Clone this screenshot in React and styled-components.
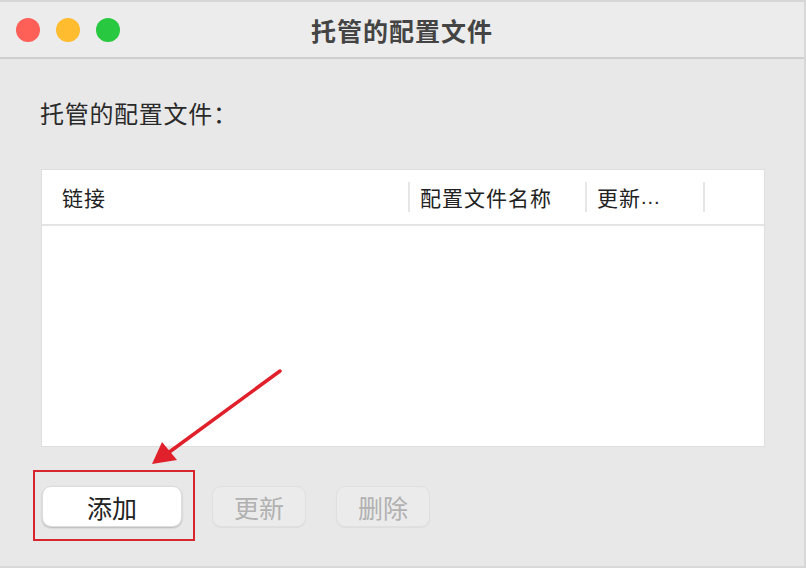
import React from "react";
import styled, { createGlobalStyle } from "styled-components";

const Global = createGlobalStyle`
  html, body { margin: 0; padding: 0; background: #e8e8e8; }
  body { font-family: "Noto Sans CJK SC", "Noto Sans", sans-serif; }
`;

const Window = styled.div`
  position: relative;
  width: 806px;
  height: 568px;
  box-sizing: border-box;
  background: #e8e8e8;
  border-top: 2px solid #d6d6d6;
  border-right: 2px solid #d8d8d8;
  border-bottom: 2px solid #d8d8d8;
  display: flex;
  flex-direction: column;
  overflow: hidden;
`;

const TitleBar = styled.div`
  height: 55px;
  flex: none;
  background: #ececec;
  border-bottom: 2px solid #cfcfcf;
  display: flex;
  align-items: center;
  position: relative;
`;

const Lights = styled.div`
  display: flex;
  gap: 16px;
  padding-left: 16px;
`;

const Light = styled.span`
  width: 24px;
  height: 24px;
  border-radius: 50%;
  background: ${(p) => p.$c};
`;

const Title = styled.div`
  position: absolute;
  left: 0;
  right: 0;
  text-align: center;
  font-size: 25px;
  font-weight: 700;
  color: #444;
  letter-spacing: 1px;
  pointer-events: none;
`;

const Content = styled.div`
  flex: 1;
  padding: 37px 39px 0 40px;
  display: flex;
  flex-direction: column;
`;

const Label = styled.div`
  font-size: 24px;
  letter-spacing: 0.7px;
  color: #2a2a2a;
  line-height: 34px;
  height: 34px;
`;

const Table = styled.div`
  margin-top: 39px;
  margin-left: 1px;
  height: 276px;
  background: #fff;
  border: 1px solid #dedede;
  display: flex;
  flex-direction: column;
`;

const Header = styled.div`
  height: 54px;
  border-bottom: 2px solid #e4e4e4;
  display: grid;
  grid-template-columns: 368px 177px 118px 1fr;
  align-items: center;
`;

const HeadCell = styled.div`
  height: 30px;
  display: flex;
  align-items: center;
  padding-left: ${(p) => p.$pl || 10}px;
  font-size: 21px;
  letter-spacing: 1px;
  color: #222;
  border-right: ${(p) => (p.$last ? "none" : "2px solid #e6e6e6")};
  white-space: nowrap;
`;

const Dots = styled.span`
  font-family: "Liberation Sans", Arial, sans-serif;
  font-size: 20px;
  letter-spacing: 1px;
  align-self: flex-end;
  padding-bottom: 3px;
`;

const Buttons = styled.div`
  margin-top: 39px;
  display: flex;
  gap: 30px;
  padding-left: 2px;
`;

const Button = styled.button`
  height: 41px;
  width: ${(p) => p.$w}px;
  border-radius: 9px;
  font-family: inherit;
  font-size: 25px;
  display: flex;
  align-items: center;
  justify-content: center;
  padding: 0;
  border: ${(p) => (p.disabled ? "1px solid #e0e0e0" : "1px solid #dcdcdc")};
  background: ${(p) => (p.disabled ? "#ebebeb" : "#fff")};
  color: ${(p) => (p.disabled ? "#b1b1b1" : "#222")};
  box-shadow: ${(p) =>
    p.disabled ? "0 1px 1px rgba(0,0,0,0.05)" : "0 1px 2px rgba(0,0,0,0.22)"};
`;

const Highlight = styled.div`
  position: absolute;
  left: 33px;
  top: 468px;
  width: 162px;
  height: 71px;
  box-sizing: border-box;
  border: 2px solid #d8262e;
  pointer-events: none;
`;

const ArrowSvg = styled.svg`
  position: absolute;
  left: 0;
  top: 0;
  pointer-events: none;
`;

export default function App() {
  return (
    <>
      <Global />
      <Window>
        <TitleBar>
          <Lights>
            <Light $c="#fe5f57" />
            <Light $c="#febc2e" />
            <Light $c="#28c840" />
          </Lights>
          <Title>托管的配置文件</Title>
        </TitleBar>
        <Content>
          <Label>托管的配置文件：</Label>
          <Table>
            <Header>
              <HeadCell $pl={20}>链接</HeadCell>
              <HeadCell>配置文件名称</HeadCell>
              <HeadCell>更新<Dots>...</Dots></HeadCell>
              <HeadCell $last />
            </Header>
          </Table>
          <Buttons>
            <Button $w={140}>添加</Button>
            <Button $w={94} disabled>更新</Button>
            <Button $w={94} disabled>删除</Button>
          </Buttons>
        </Content>
        <Highlight />
        <ArrowSvg width="806" height="568" viewBox="0 0 806 568">
          <line x1="280" y1="369" x2="168" y2="451" stroke="#e0202a" strokeWidth="3.5" strokeLinecap="round" />
          <polygon points="152,462 162,440 177,458" fill="#e0202a" />
        </ArrowSvg>
      </Window>
    </>
  );
}
